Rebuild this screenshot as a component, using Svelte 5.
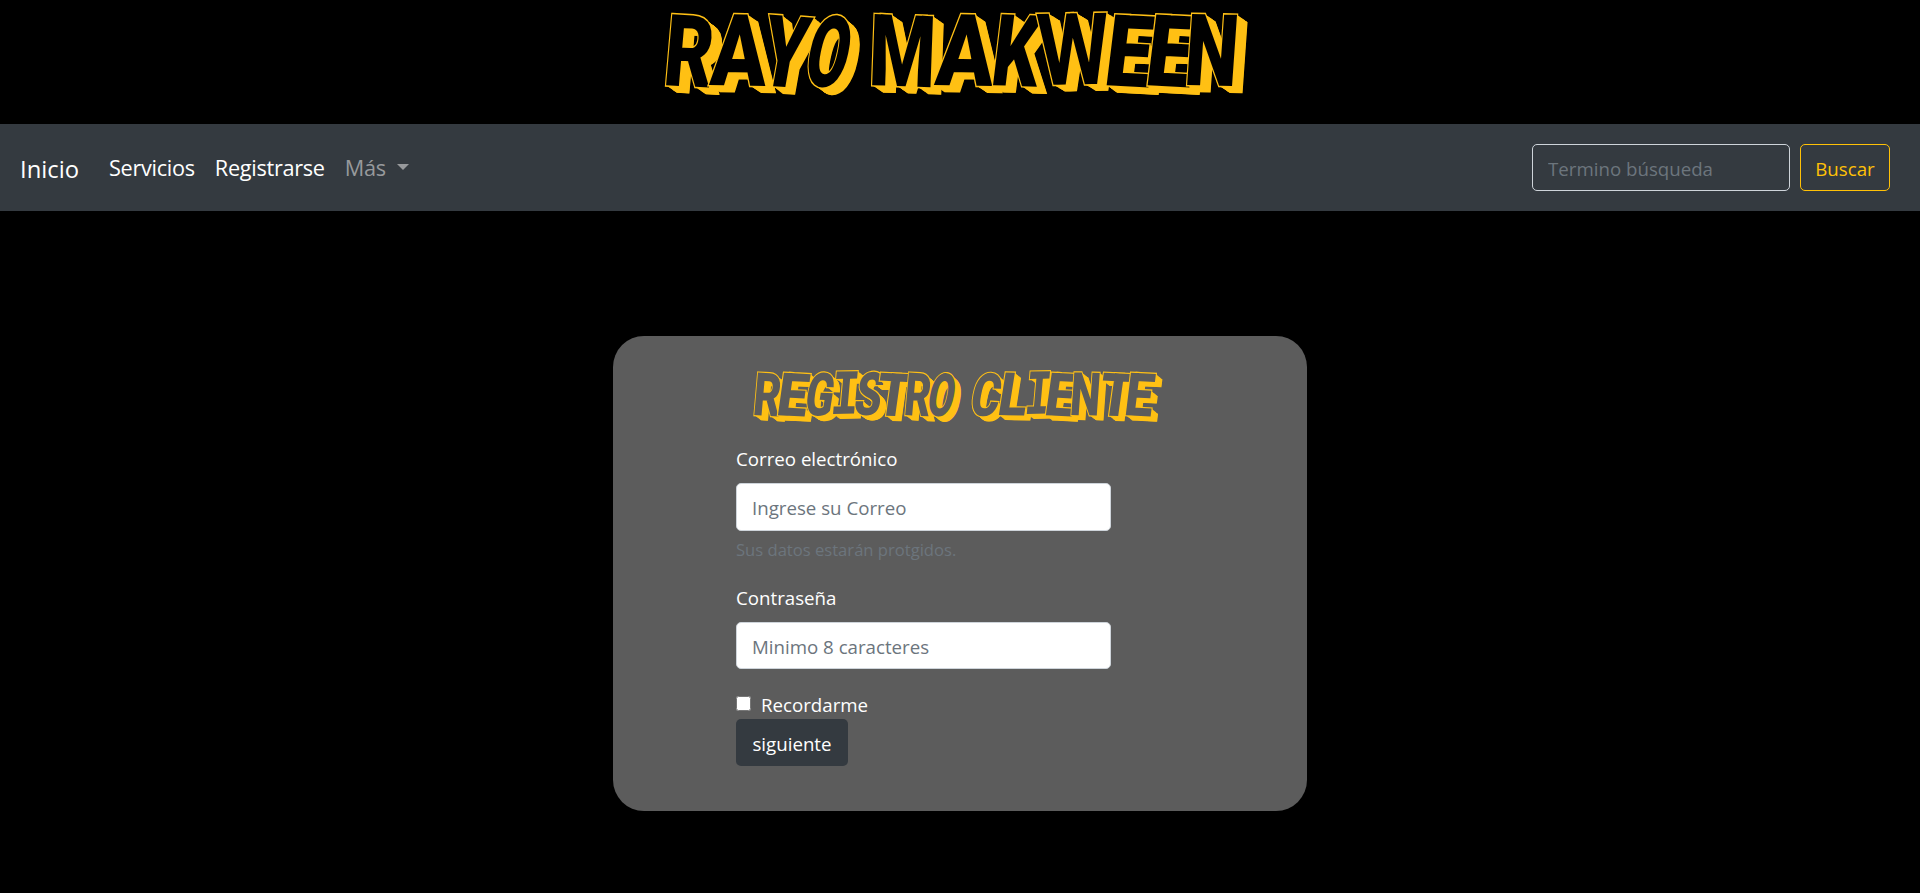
<script>
  // Advance widths of the heavy capitals, in em
  const advance = { R: 0.64, A: 0.68, Y: 0.65, O: 0.69, M: 0.88, K: 0.65, W: 0.87, E: 0.55, N: 0.7, G: 0.68, I: 0.58, S: 0.62, T: 0.62, C: 0.66, L: 0.54 };

  // [letter, slot width, face width, tilt in degrees, lean in degrees]
  const brand = [
    ['R', 47, 48, 3, -2], ['A', 48, 56, 1, -2], ['Y', 44, 46, 4, -6], ['O', 46, 42, 4, -8], [' ', 21, 0, 0, 0],
    ['M', 66, 67, 2, 0], ['A', 55, 58, 1, -3], ['K', 50, 48, 2, -5], ['W', 63, 72, -1, 2],
    ['E', 41, 47, 3, -4], ['E', 40, 47, 3, -4], ['N', 57, 53, 1, -3]
  ];
  const title = [
    ['R', 23, 27, 3, -2], ['E', 28, 30, 3, -5], ['G', 26, 28, 2, -7], ['I', 23, 29, -1, -6], ['S', 22, 27, 0, -10],
    ['T', 29, 33, 3, -5], ['R', 22, 26, 3, -2], ['O', 28, 26, 4, -7], [' ', 15, 0, 0, 0],
    ['C', 28, 29, 3, -8], ['L', 27, 29, 1, -8], ['I', 20, 27, -1, -6], ['E', 26, 29, 3, -5],
    ['N', 28, 30, 1, -3], ['T', 26, 33, 3, -5], ['E', 31, 28, 3, -4]
  ];

  const columns = (letters) => letters.map((l) => l[1] + 'px').join(' ');

  function extrude(depth, drop, sx) {
    const steps = [];
    for (let i = 1; i <= depth * 2; i++) {
      const k = i / 2;
      steps.push(`${(k / sx).toFixed(2)}px ${((k * drop) / depth).toFixed(2)}px 0 #ffc015`);
    }
    return steps.join(',');
  }

  function styleOf([ch, slot, face, tilt, lean], size, depth, drop) {
    if (ch === ' ') return '';
    const sx = face / (advance[ch] * size);
    return `transform:rotate(${tilt}deg) skewX(${lean}deg) scaleX(${sx.toFixed(3)});text-shadow:${extrude(depth, drop, sx)}`;
  }
</script>

<header>
  <h1 class="graffiti brand" style="grid-template-columns:{columns(brand)}">{#each brand as l}<span class="glyph" class:open={l[0] === 'W'} style={styleOf(l, 100, 11, 7)}>{l[0]}</span>{/each}</h1>
</header>

<nav>
  <a class="home" href="#inicio">Inicio</a>
  <ul>
    <li><a href="#servicios">Servicios</a></li>
    <li><a href="#registrarse">Registrarse</a></li>
    <li><a class="more" href="#mas">Más<i class="caret"></i></a></li>
  </ul>
  <form class="search">
    <input type="search" placeholder="Termino búsqueda" />
    <button type="button">Buscar</button>
  </form>
</nav>

<main>
  <section class="card">
    <h2 class="graffiti title" style="grid-template-columns:{columns(title)}">{#each title as l}<span class="glyph" class:slab={l[0] === 'I'} style={styleOf(l, 60, 7, 5)}>{l[0]}</span>{/each}</h2>
    <form class="fields">
      <label for="correo">Correo electrónico</label>
      <input id="correo" type="email" placeholder="Ingrese su Correo" />
      <small>Sus datos estarán protgidos.</small>
      <label for="clave">Contraseña</label>
      <input id="clave" class="second" type="password" placeholder="Minimo 8 caracteres" />
      <div class="remember">
        <input id="recordar" type="checkbox" />
        <label for="recordar">Recordarme</label>
      </div>
      <button class="next" type="button">siguiente</button>
    </form>
  </section>
</main>

<style>
  :global(body) {
    margin: 0;
    background: #000;
    color: #fff;
    font-family: 'Open Sans', 'Noto Sans', sans-serif;
    font-size: 18.7px;
  }
  * { box-sizing: border-box; }
  a { color: #fff; text-decoration: none; }
  input, button { font: inherit; }

  header { height: 124px; }
  .graffiti {
    display: grid;
    margin: 0;
    font-family: Roboto, sans-serif;
    font-weight: 900;
    white-space: pre;
  }
  .glyph {
    display: block;
    width: max-content;
    transform-origin: 0 84%;
    -webkit-text-stroke: 3px #ffc015;
    paint-order: stroke fill;
  }
  .open { font-weight: 700; }
  .brand {
    padding: 1px 0 0 662px;
    font-size: 100px;
    line-height: 100px;
    color: #000;
  }
  .title {
    padding-left: 139px;
    font-size: 60px;
    line-height: 61px;
    color: #5c5c5c;
  }
  .title .glyph { -webkit-text-stroke-width: 2.4px; }
  .title .slab { font-family: 'DejaVu Sans Mono', monospace; font-size: 58px; }

  nav {
    display: flex;
    align-items: center;
    height: 87px;
    padding: 0 30px 0 20px;
    background: #343a40;
  }
  .home { width: 89px; font-size: 23.8px; line-height: 36px; padding-top: 2px; }
  ul { display: flex; margin: 0; padding: 0; list-style: none; font-size: 21.7px; letter-spacing: -0.3px; }
  li { margin-right: 20px; line-height: 34px; }
  .more { display: flex; align-items: center; color: #97999c; }
  .caret {
    margin-left: 11px;
    border: 6px solid transparent;
    border-top-color: currentColor;
    border-bottom: 0;
    transform: translateY(-1px);
  }
  .search { display: flex; gap: 10px; margin-left: auto; }
  .search input {
    width: 258px;
    height: 47px;
    padding: 2px 15px 0;
    border: 1px solid #ced4da;
    border-radius: 5px;
    background: transparent;
  }
  .search button {
    width: 90px;
    height: 47px;
    padding: 2px 0 0;
    border: 1px solid #ffc107;
    border-radius: 5px;
    background: transparent;
    color: #ffc107;
  }
  ::placeholder { color: #6c757d; opacity: 1; }

  main { display: flex; justify-content: center; padding-top: 125px; }
  .card {
    width: 694px;
    height: 475px;
    padding-top: 28px;
    border-radius: 31px;
    background: #5c5c5c;
  }
  .fields { display: flex; flex-direction: column; align-items: flex-start; padding: 19px 0 0 123px; }
  .fields > label { line-height: 30px; }
  .fields > input {
    width: 375px;
    height: 48px;
    margin-top: 9px;
    padding: 1px 15px 0;
    border: 1px solid #ced4da;
    border-radius: 5px;
    background: #fff;
  }
  small { margin: 5px 0 20px; font-size: 16.6px; line-height: 27px; color: #6c757d; }
  .fields > .second { height: 47px; }
  .remember { display: flex; align-items: center; height: 30px; margin-top: 20px; }
  .remember input { width: 15px; height: 15px; margin: 0 10px 2px 0; }
  .next {
    width: 112px;
    height: 47px;
    padding: 2px 0 0;
    border: 0;
    border-radius: 5px;
    background: #343a40;
    color: #fff;
  }
</style>
